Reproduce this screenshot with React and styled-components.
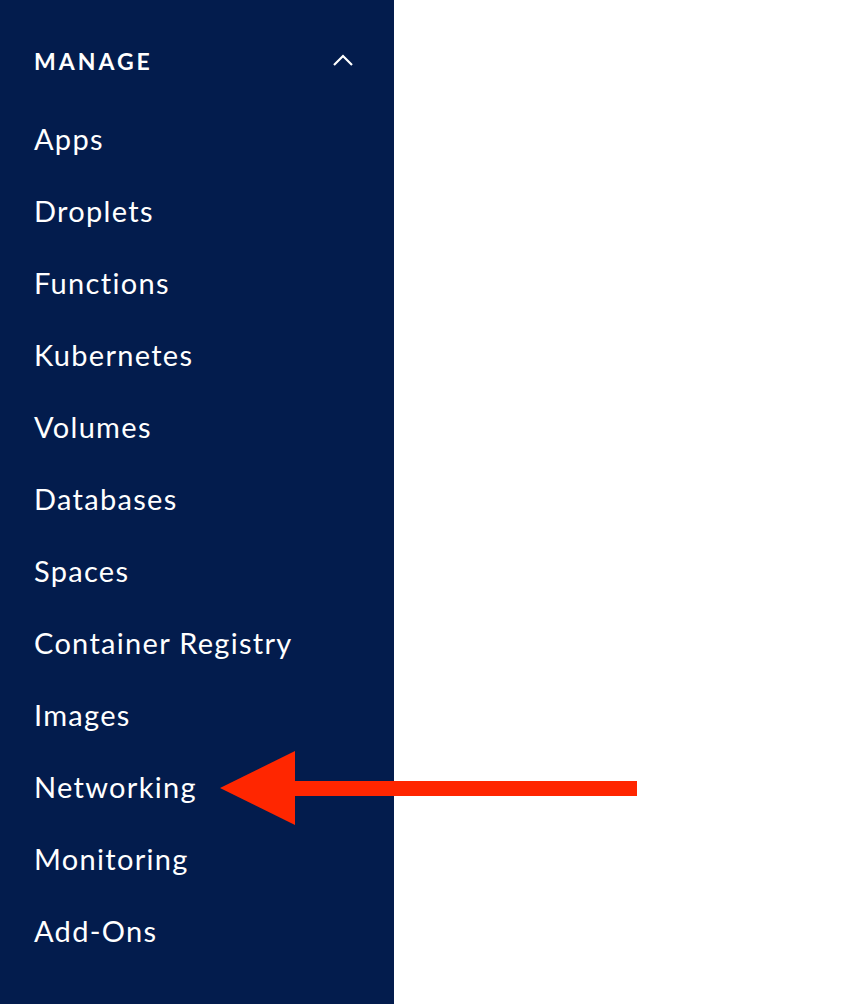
import React from 'react';
import styled, { createGlobalStyle } from 'styled-components';

const GlobalStyle = createGlobalStyle`
  html, body {
    margin: 0;
    padding: 0;
    background: #ffffff;
  }
  body {
    font-family: 'Lato', 'Noto Sans', sans-serif;
  }
`;

const Page = styled.div`
  position: relative;
  display: flex;
  width: 868px;
  height: 1004px;
  overflow: hidden;
`;

const Sidebar = styled.nav`
  width: 394px;
  height: 100%;
  background: #031c4d;
  color: #ffffff;
  padding: 40px 40px 0 34px;
  box-sizing: border-box;
`;

const Header = styled.div`
  display: flex;
  align-items: center;
  justify-content: space-between;
  height: 42px;
  margin-bottom: 21px;
`;

const Title = styled.span`
  font-size: 23px;
  font-weight: 700;
  letter-spacing: 3px;
`;

const List = styled.ul`
  list-style: none;
  margin: 0;
  padding: 0;
`;

const Item = styled.li`
  height: 72px;
  line-height: 72px;
  font-size: 29px;
  font-weight: 400;
  letter-spacing: 1.3px;
  white-space: nowrap;
`;

const Arrow = styled.svg`
  position: absolute;
  left: 218px;
  top: 748px;
`;

const items = [
  'Apps',
  'Droplets',
  'Functions',
  'Kubernetes',
  'Volumes',
  'Databases',
  'Spaces',
  'Container Registry',
  'Images',
  'Networking',
  'Monitoring',
  'Add-Ons',
];

const App = () => {
  return (
    <>
      <GlobalStyle />
      <Page>
        <Sidebar>
          <Header>
            <Title>MANAGE</Title>
            <svg width="22" height="14" viewBox="0 0 22 14">
              <path d="M2 11 L11 2 L20 11" fill="none" stroke="#fff" strokeWidth="2.2" />
            </svg>
          </Header>
          <List>
            {items.map((name) => (
              <Item key={name}>{name}</Item>
            ))}
          </List>
        </Sidebar>
        <Arrow width="422" height="80" viewBox="0 0 422 80">
          <rect x="76" y="33" width="343" height="15" fill="#ff2600" />
          <polygon points="2,40 77,3 77,77" fill="#ff2600" />
        </Arrow>
      </Page>
    </>
  );
};

export default App;
